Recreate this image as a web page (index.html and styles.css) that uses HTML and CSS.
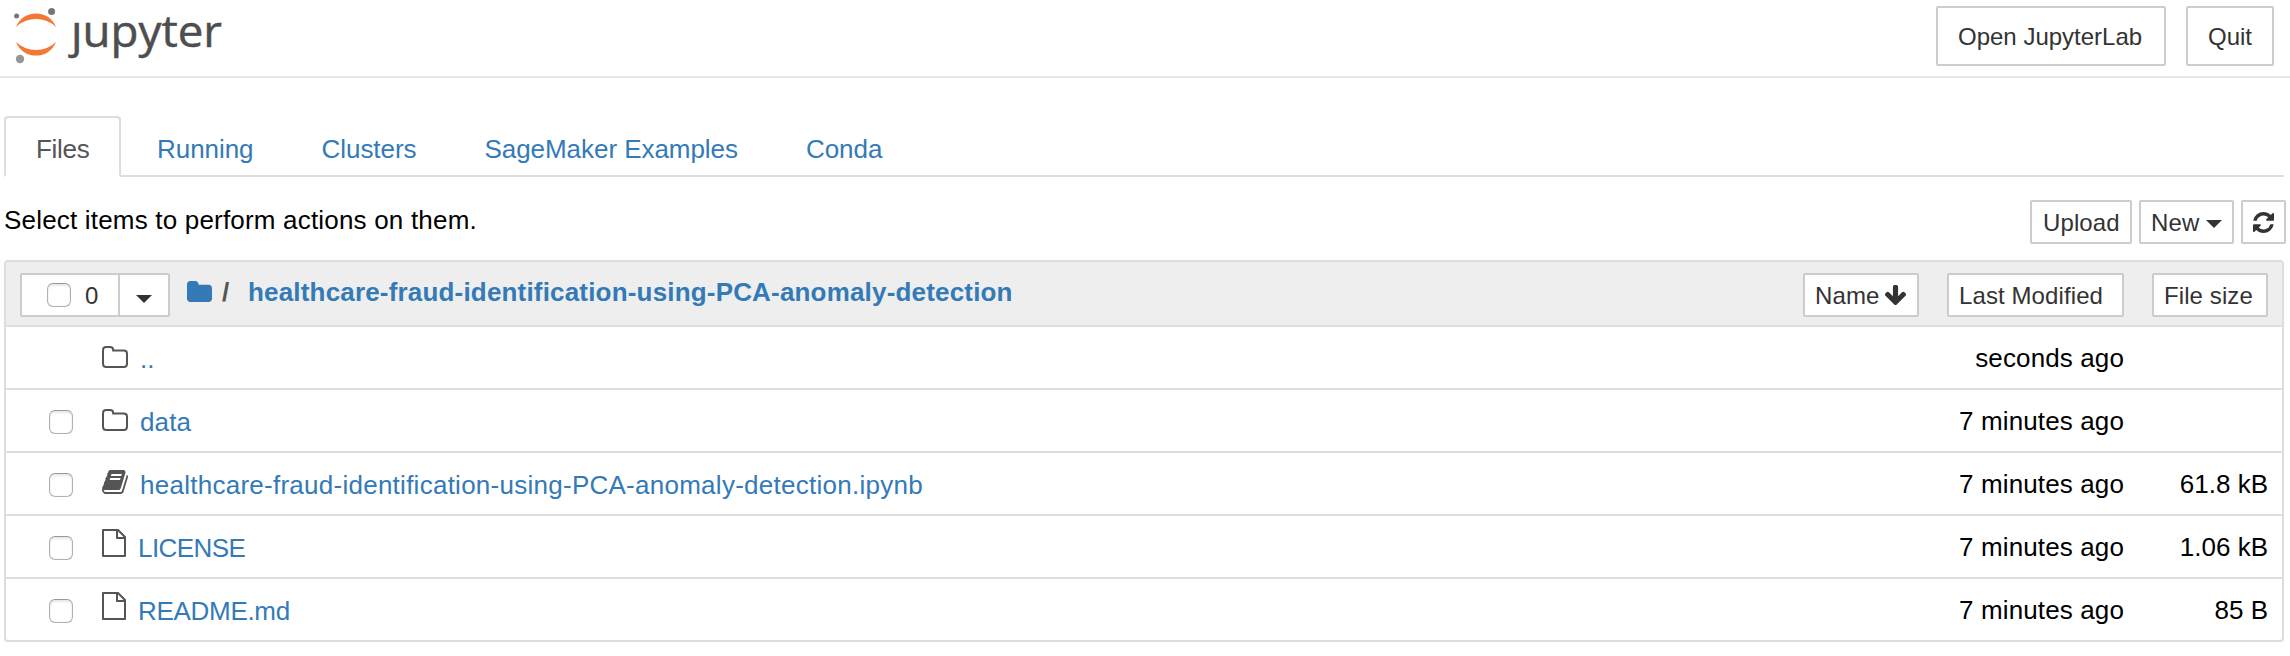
FILE: index.html
```html
<!DOCTYPE html>
<html lang="en">
<head>
<meta charset="utf-8">
<title>Jupyter</title>
<link rel="stylesheet" href="styles.css">
</head>
<body>
<svg class="defs" width="0" height="0" aria-hidden="true">
  <symbol id="folder-o" viewBox="0 0 26 22"><path d="M1 4.2Q1 1 4.2 1H8Q11.200 1 11.200 4.200V4.600H21.800Q25 4.600 25 7.800V17.800Q25 21 21.800 21H4.200Q1 21 1 17.800Z" fill="none" stroke="currentColor" stroke-width="2"/></symbol>
  <symbol id="file-o" viewBox="0 0 24 28"><path d="M1 1H16L23 8V27H1ZM15 1V9H23" fill="none" stroke="currentColor" stroke-width="2" stroke-linejoin="round"/></symbol>
  <symbol id="book" viewBox="64 128 1665 1536"><path fill="currentColor" d="M1703 478q40 57 18 129l-275 906q-19 64-76.500 107.500t-122.500 43.500h-923q-77 0-148.500-53.500t-99.500-131.500q-24-67-2-127 0-4 3-27t4-37q1-8-3-21.500t-3-19.500q2-11 8-21t16.500-23.500 16.500-23.500q23-38 45-91.500t30-91.500q3-10 .5-30t-.5-28q3-11 17-28t17-23q21-36 42-92t25-90q1-9-2.500-32t.5-28q4-13 22-30.500t22-22.500q19-26 42.500-84.500t27.500-96.500q1-8-3-25.500t-2-26.500q2-8 9-18t18-23 17-21q8-12 16.500-30.500t15-35 16-36 19.500-32 26.500-23.500 36-11.500 47.500 5.500l-1 3q38-9 51-9h761q74 0 114 56t18 130l-274 906q-36 119-71.500 153.500t-128.500 34.500h-869q-27 0-38 15-11 16-1 43 24 70 144 70h923q29 0 56-15.500t35-41.500l300-987q7-22 5-57 38 15 59 43zm-1064 2q-4 13 2 22.500t20 9.500h608q13 0 25.500-9.500t16.500-22.500l21-64q4-13-2-22.500t-20-9.500h-608q-13 0-25.500 9.500t-16.500 22.500zm-83 256q-4 13 2 22.500t20 9.500h608q13 0 25.500-9.500t16.500-22.500l21-64q4-13-2-22.500t-20-9.500h-608q-13 0-25.500 9.500t-16.500 22.500z"/></symbol>
</svg>

<header class="header">
  <svg class="logo" width="230" height="74" viewBox="0 0 230 74">
    <path d="M16 27A21.500 21.500 0 0 1 56 27A29 29 0 0 0 16 27ZM16 42A21.500 21.500 0 0 0 56 42A29 29 0 0 1 16 42Z" fill="#f37833"/>
    <circle cx="16.600" cy="16" r="2.500" fill="#767677"/>
    <circle cx="51.600" cy="11.600" r="3.500" fill="#767677"/>
    <circle cx="20" cy="59" r="4.200" fill="#989798"/>
    <text class="logo-text" x="71" y="46.500" textLength="151" lengthAdjust="spacingAndGlyphs">ȷupyter</text>
  </svg>
  <div class="header-actions">
    <button class="btn btn-lg open-lab"><span>Open JupyterLab</span></button>
    <button class="btn btn-lg quit"><span>Quit</span></button>
  </div>
</header>

<main class="main">
  <nav class="tabs">
    <a class="tab active"><span>Files</span></a>
    <a class="tab"><span>Running</span></a>
    <a class="tab"><span>Clusters</span></a>
    <a class="tab"><span>SageMaker Examples</span></a>
    <a class="tab"><span>Conda</span></a>
  </nav>

  <div class="toolbar">
    <span class="hint">Select items to perform actions on them.</span>
    <div class="toolbar-actions">
      <button class="btn upload"><span>Upload</span></button>
      <button class="btn new"><span>New</span><i class="caret"></i></button>
      <button class="btn refresh"><svg width="21" height="21" viewBox="0 128 1536 1536"><path fill="currentColor" d="M1511 1056q0 5-1 7-64 268-268 434.500T764 1664q-146 0-282.500-55T238 1452l-129 129q-19 19-45 19t-45-19-19-45v-448q0-26 19-45t45-19h448q26 0 45 19t19 45-19 45l-137 137q71 66 161 102t187 36q134 0 250-65t186-179q11-17 53-117 8-23 30-23h192q13 0 22.500 9.500t9.500 22.500zm25-800v448q0 26-19 45t-45 19h-448q-26 0-45-19t-19-45 19-45l138-138q-148-137-349-137-134 0-250 65T332 628q-11 17-53 117-8 23-30 23H50q-13 0-22.500-9.500T18 736v-7q65-268 270-434.500T768 128q146 0 284 55.500T1297 340l130-129q19-19 45-19t45 19 19 45z"/></svg></button>
    </div>
  </div>

  <section class="list">
    <div class="list-header">
      <div class="select-group">
        <button class="btn select-all"><i class="check"></i><span>0</span></button>
        <button class="btn select-menu"><i class="caret"></i></button>
      </div>
      <div class="crumbs">
        <svg class="crumb-icon" width="25" height="21" viewBox="64 128 1664 1408" preserveAspectRatio="none"><path fill="currentColor" d="M1728 608v704q0 92-66 158t-158 66h-1216q-92 0-158-66t-66-158v-960q0-92 66-158t158-66h320q92 0 158 66t66 158v32h672q92 0 158 66t66 158z"/></svg>
        <span class="slash">/</span>
        <a class="crumb">healthcare-fraud-identification-using-PCA-anomaly-detection</a>
      </div>
      <div class="sorts">
        <button class="btn sort-name"><span>Name</span><svg width="21" height="20" viewBox="117 128 1558 1483"><path fill="currentColor" d="M1675 832q0 53-37 90l-651 652q-39 37-91 37-53 0-90-37l-651-652q-38-36-38-90 0-53 38-91l74-75q39-37 91-37 53 0 90 37l294 294v-704q0-52 38-90t90-38h128q52 0 90 38t38 90v704l294-294q37-37 90-37 52 0 91 37l75 75q37 39 37 91z"/></svg></button>
        <button class="btn sort-date"><span>Last Modified</span></button>
        <button class="btn sort-size"><span>File size</span></button>
      </div>
    </div>
    <div class="row"><i class="check hidden"></i><svg class="icon folder"><use href="#folder-o"/></svg><a class="name">..</a><span class="date">seconds ago</span><span class="size"></span></div>
    <div class="row"><i class="check"></i><svg class="icon folder"><use href="#folder-o"/></svg><a class="name">data</a><span class="date">7 minutes ago</span><span class="size"></span></div>
    <div class="row"><i class="check"></i><svg class="icon book"><use href="#book"/></svg><a class="name long">healthcare-fraud-identification-using-PCA-anomaly-detection.ipynb</a><span class="date">7 minutes ago</span><span class="size">61.8 kB</span></div>
    <div class="row"><i class="check"></i><svg class="icon file"><use href="#file-o"/></svg><a class="name upper">LICENSE</a><span class="date">7 minutes ago</span><span class="size">1.06 kB</span></div>
    <div class="row"><i class="check"></i><svg class="icon file"><use href="#file-o"/></svg><a class="name upper mixed">README.md</a><span class="date">7 minutes ago</span><span class="size">85 B</span></div>
  </section>
</main>
</body>
</html>
```
FILE: styles.css
```css
* { box-sizing: border-box; }
body {
  margin: 0;
  background: #fff;
  color: #000;
  font: 26px/36px "Liberation Sans", Arial, sans-serif;
  overflow: hidden;
}
a { color: #337ab7; }
svg { display: block; }
.defs { display: none; }

.header {
  display: flex;
  justify-content: space-between;
  height: 78px;
  border-bottom: 2px solid #e7e7e7;
}
.logo-text {
  font: 44px "Open Sans", "Noto Sans", sans-serif;
  fill: #4e4e4e;
  stroke: #4e4e4e;
  stroke-width: 0.5px;
}
.header-actions {
  display: flex;
  gap: 20px;
  padding: 6px 16px 0 0;
}

.btn {
  display: flex;
  align-items: center;
  height: 44px;
  padding: 0 0 0 10px;
  border: 2px solid #ccc;
  border-radius: 2px;
  background: #fff;
  color: #333;
  font: 24px/36px "Liberation Sans", Arial, sans-serif;
  letter-spacing: 0.1px;
  white-space: nowrap;
}
.btn span { padding-top: 2px; }
.btn-lg { height: 60px; padding-left: 20px; letter-spacing: 0; }
.open-lab { width: 230px; }
.quit { width: 88px; }

.main { padding: 38px 6px 0 4px; }
.tabs {
  display: flex;
  height: 61px;
  border-bottom: 2px solid #ddd;
}
.tab {
  height: 61px;
  margin-right: 4px;
  padding: 13px 30px 0;
  border: 2px solid transparent;
  border-radius: 4px 4px 0 0;
  letter-spacing: -0.05px;
  white-space: nowrap;
}
.tab.active {
  width: 117px;
  border-color: #ddd;
  border-bottom-color: #fff;
  background: #fff;
  color: #555;
  letter-spacing: -0.3px;
}

.toolbar {
  display: flex;
  justify-content: space-between;
  height: 83px;
  padding-top: 23px;
}
.hint { padding-top: 2px; letter-spacing: 0.19px; }
.toolbar-actions { display: flex; gap: 7px; margin-right: -2px; }
.upload { width: 102px; padding-left: 11px; }
.new { width: 95px; }
.refresh { width: 45px; }
.caret {
  border: 8px solid transparent;
  border-top-color: #333;
  border-bottom: 0;
}
.new .caret { margin: 4px 0 0 7px; }

.list {
  border: 2px solid #ddd;
  border-radius: 4px;
}
.list-header {
  display: flex;
  height: 63px;
  padding: 11px 14px 0;
  background: #eee;
}
.select-group { display: flex; }
.select-all { width: 100px; padding-left: 25px; border-radius: 2px 0 0 2px; }
.select-all span { margin-left: 14px; }
.select-menu { width: 52px; margin-left: -2px; padding-left: 16px; border-radius: 0 2px 2px 0; }
.select-menu .caret { margin-top: 8px; }
.crumbs {
  display: flex;
  flex: 1;
  padding-left: 17px;
  color: #555;
  font-weight: bold;
  line-height: 39px;
}
.crumb-icon { margin-top: 8px; color: #337ab7; }
.slash { width: 26px; margin-left: 10px; }
.crumb { letter-spacing: 0.18px; }
.sorts { display: flex; gap: 28px; }
.sort-name { width: 116px; }
.sort-name svg { margin-left: 6px; }
.sort-date { width: 177px; }
.sort-size { width: 116px; }

.check {
  width: 24px;
  height: 24px;
  border: 1px solid #b0b0b0;
  border-top-color: #999;
  border-radius: 6px;
  background: #fff;
  box-shadow: inset 0 2px 2px #e8e8e8, inset 0 0 1px #ccc;
}
.check.hidden { visibility: hidden; }

.row {
  display: grid;
  grid-template-columns: 24px 26px 1fr 200px 144px;
  height: 63px;
  padding: 0 14px 0 43px;
  border-top: 2px solid #ddd;
}
.row .check { margin-top: 20px; }
.icon { color: #555; }
.row .icon { margin-left: 29px; }
.row .name { padding: 14px 0 0 41px; letter-spacing: 0.15px; white-space: nowrap; }
.row .long { letter-spacing: 0.26px; }
.row .upper { padding-left: 39px; letter-spacing: -0.55px; }
.row .mixed { letter-spacing: -0.3px; }
.folder { width: 26px; height: 22px; margin-top: 19px; }
.book { width: 26px; height: 24px; margin-top: 17px; }
.file { width: 24px; height: 28px; margin-top: 13px; }
.date, .size { padding-top: 13px; text-align: right; white-space: nowrap; }
.date { letter-spacing: 0.12px; }
```
